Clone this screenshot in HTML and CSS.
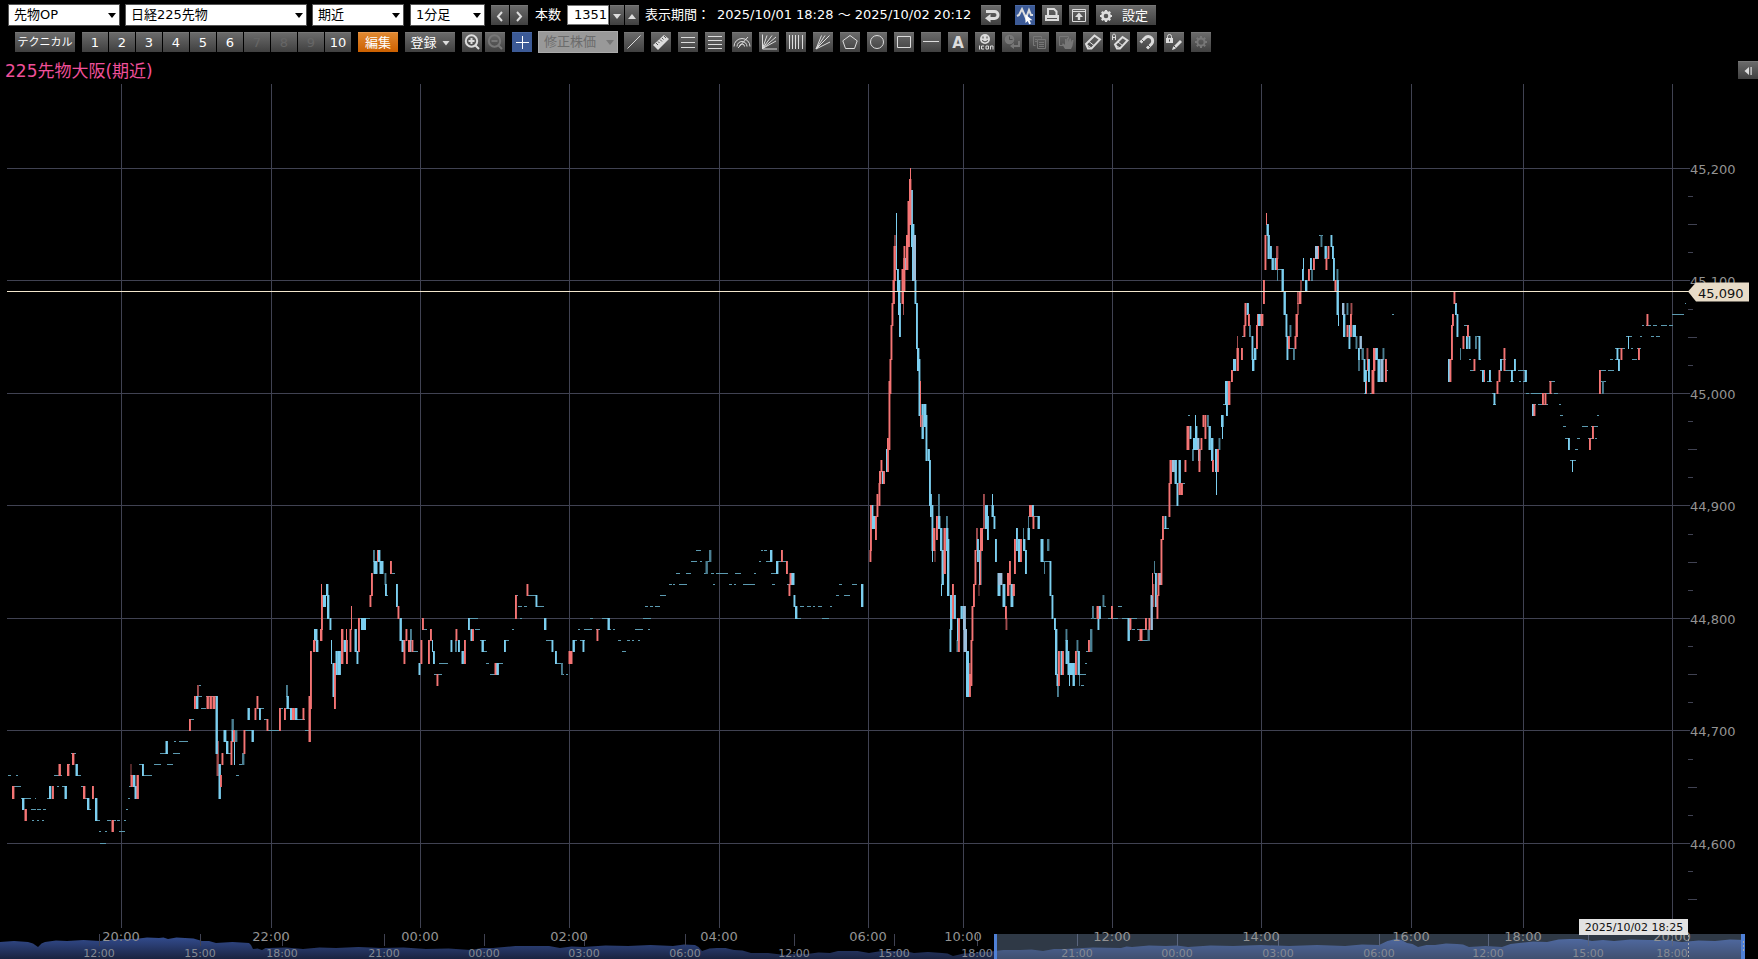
FILE: index.html
```html
<!DOCTYPE html>
<html lang="ja">
<head>
<meta charset="utf-8">
<title>225先物大阪(期近)</title>
<link rel="stylesheet" href="styles.css">
</head>
<body>
<header class="toolbars">
  <div class="bar bar-main">
    <label class="pick pick-market"><select aria-label="市場"><option>先物OP</option></select></label>
    <label class="pick pick-symbol"><select aria-label="銘柄"><option>日経225先物</option></select></label>
    <label class="pick pick-month"><select aria-label="限月"><option>期近</option></select></label>
    <label class="pick pick-span"><select aria-label="足種"><option>1分足</option></select></label>
    <div class="pair">
      <button class="btn arrow" aria-label="前へ"><svg viewBox="0 0 18 20"><path class="s2" d="M11 6 7 10.500 11 15"/></svg></button>
      <button class="btn arrow" aria-label="次へ"><svg viewBox="0 0 18 20"><path class="s2" d="M7 6 11 10.500 7 15"/></svg></button>
    </div>
    <label class="caption" for="count">本数</label>
    <div class="pair count">
      <input id="count" type="text" value="1351">
      <button class="btn step" aria-label="減らす"><svg viewBox="0 0 14 20"><path class="f" d="M3 8h8L7 13z"/></svg></button>
      <button class="btn step" aria-label="増やす"><svg viewBox="0 0 14 20"><path class="f" d="M3 13h8L7 8z"/></svg></button>
    </div>
    <span class="caption period">表示期間：</span>
    <span class="caption range">2025/10/01 18:28 ～ 2025/10/02 20:12</span>
    <button class="btn icon" aria-label="戻す"><svg viewBox="0 0 20 20"><path d="M5 6.500h8.500a2.500 2.500 0 0 1 0 7H8" fill="none" stroke="#ddd" stroke-width="3"/><path class="f" d="M9.500 9v8.500L4 13.300z"/></svg></button>
    <div class="tools view-tools">
      <button class="btn icon on" aria-label="チャート選択"><svg viewBox="0 0 20 20"><path class="s2" d="M2 11l2-1 3-6 4 9 3-8 2 5h2"/><path d="M10.500 9.500v8.500l2.200-2 1.500 3.200 1.800-.8-1.500-3.100h3z" fill="#fff"/></svg></button>
      <button class="btn icon" aria-label="印刷"><svg viewBox="0 0 20 20"><path class="s2" d="M6 10V4h6l2.500 2.500V10"/><path class="f" d="M3 10h14v6H3z"/><path d="M5 13.500h10" stroke="#555"/></svg></button>
      <button class="btn icon" aria-label="別画面"><svg viewBox="0 0 20 20"><path class="s1" d="M3.500 4.500h13v12h-13zM3.500 6.500h13"/><path class="f" d="M10 7.500 14 12h-2.800v3H8.800v-3H6z"/></svg></button>
      <button class="btn setup"><svg viewBox="0 0 20 20"><circle cx="10" cy="10" r="3.600" fill="none" stroke="#ddd" stroke-width="2.600"/><path d="M10 4v2M10 14v2M4 10h2M14 10h2M5.800 5.800l1.400 1.400M12.800 12.800l1.400 1.400M5.800 14.200l1.400-1.400M12.800 7.200l1.400-1.400" stroke="#ddd" stroke-width="2.200"/></svg><span>設定</span></button>
    </div>
  </div>

  <div class="bar bar-tools">
    <button class="btn technical">テクニカル</button>
    <div class="pair numbers">
      <button class="btn">1</button><button class="btn">2</button><button class="btn">3</button><button class="btn">4</button><button class="btn">5</button><button class="btn">6</button><button class="btn" disabled>7</button><button class="btn" disabled>8</button><button class="btn" disabled>9</button><button class="btn">10</button>
    </div>
    <button class="btn edit">編集</button>
    <button class="btn save">登録<svg viewBox="0 0 8 8"><path class="f" d="M.5 2h7L4 6.500z"/></svg></button>
    <div class="zooms">
      <button class="btn icon" aria-label="拡大"><svg viewBox="0 0 20 20"><circle class="s2" cx="9.500" cy="9" r="5.700"/><path class="s2" d="M6.500 9h6M9.500 6v6M13.500 13.500 17 17"/></svg></button>
      <button class="btn icon" disabled aria-label="縮小"><svg viewBox="0 0 20 20"><circle class="s2" cx="9.500" cy="9" r="5.700"/><path class="s2" d="M6.500 9h6M13.500 13.500 17 17"/></svg></button>
    </div>
    <button class="btn icon on" aria-label="十字カーソル"><svg viewBox="0 0 20 20"><path d="M10.500 4v13M4 10.500h13" stroke="#fff"/></svg></button>
    <label class="pick pick-adjust"><select aria-label="修正株価" disabled><option>修正株価</option></select></label>
    <div class="tools">
      <button class="btn icon" aria-label="直線"><svg viewBox="0 0 20 20"><path class="s1" d="M3.500 16.500l13-13"/></svg></button>
      <button class="btn icon" aria-label="定規"><svg viewBox="0 0 20 20"><path class="f" d="M2 13 13 3l5 4L7 18z"/><path d="M5 11l2 2M7 9.500l1.500 1.500M9 7.500l2 2M11 6l1.500 1.500M13 4l2 2" stroke="#555"/></svg></button>
      <button class="btn icon" aria-label="三本線"><svg viewBox="0 0 20 20"><path class="s1" d="M3 5.500h14M3 10.500h14M3 15.500h14"/></svg></button>
      <button class="btn icon" aria-label="水平線群"><svg viewBox="0 0 20 20"><path class="s1" d="M3 4.500h14M3 8.500h14M3 12.500h14M3 16.500h14"/></svg></button>
      <button class="btn icon" aria-label="アーク"><svg viewBox="0 0 20 20"><path class="s1" d="M2 14.500a8 8 0 0 1 16 0M5 14.500a5 5 0 0 1 10 0M7.500 14.500a2.500 2.500 0 0 1 5 0M6 16 16 5"/></svg></button>
      <button class="btn icon" aria-label="ファン"><svg viewBox="0 0 20 20"><path class="s1" d="M3.500 2.500v14.500h14.500M3.500 16.500 8 3.500M3.500 16.500 13 3.500M3.500 16.500 17 5M3.500 16.500 17 9"/></svg></button>
      <button class="btn icon" aria-label="垂直線群"><svg viewBox="0 0 20 20"><path class="s1" d="M3.500 3v14M6.500 3v14M9.500 3v14M12.500 3v14M16.500 3v14"/></svg></button>
      <button class="btn icon" aria-label="扇形"><svg viewBox="0 0 20 20"><path class="s1" d="M3 17 8.500 3.500M3 17 16.500 3.500M3 17 17 10M3 17 12 3.500"/></svg></button>
      <button class="btn icon" aria-label="多角形"><svg viewBox="0 0 20 20"><path class="s1" d="M10 3.500l7.200 5.300-2.700 7.700h-9L2.800 8.800z"/></svg></button>
      <button class="btn icon" aria-label="円"><svg viewBox="0 0 20 20"><circle class="s1" cx="10" cy="10" r="6.500"/></svg></button>
      <button class="btn icon" aria-label="四角形"><svg viewBox="0 0 20 20"><path class="s1" d="M3.500 4.500h13v11h-13z"/></svg></button>
      <button class="btn icon" aria-label="水平線"><svg viewBox="0 0 20 20"><path class="s1" d="M2 9.500h16"/></svg></button>
      <button class="btn icon letter">A</button>
      <button class="btn icon" aria-label="アイコン"><svg viewBox="0 0 20 20"><circle cx="10" cy="7" r="5" fill="#ddd"/><path d="M8 4.500v2M12 4.500v2M7 8.500q3 3 6 0" stroke="#444" fill="none"/><path class="s1" d="M4.500 13.500v4M9 14H6.500v3H9M11 14h2.500v3H11zM15.500 17.500V14H18v3.500"/></svg></button>
      <button class="btn icon" disabled aria-label="履歴"><svg viewBox="0 0 20 20"><circle class="f" cx="7.500" cy="7.500" r="4.800"/><path d="M7.500 4.500v3h3" stroke="#4c4c4c" fill="none"/><path class="s2" d="M17 9v5h-6"/><path class="f" d="M12 11v6l-4-3z"/></svg></button>
      <button class="btn icon" disabled aria-label="複製"><svg viewBox="0 0 20 20"><path class="s1" d="M6.500 13.500h-2v-9h8v2M8.500 7.500h8v9h-8zM10 10.500h5M10 12.500h5M10 14.500h5M6 7.500h2M6 9.500h2"/></svg></button>
      <button class="btn icon" disabled aria-label="移動"><svg viewBox="0 0 20 20"><path class="s1" d="M8 13.500H3.500v-9h9V7"/><path class="f" d="M9 17l-3-5 1-.8 2 1.500V7h1.500v3L11 6h1.500v4l1-3.500H15V10l1-2h1.500l-1 6-1.500 3z"/></svg></button>
      <button class="btn icon" aria-label="消しゴム"><svg viewBox="0 0 20 20"><path class="s2" d="M3 12 11.500 3.500l5.500 4L8.500 16.500H5z"/><path class="s1" d="M3.500 12.500l5 3.500M6 9.500l5 4"/></svg></button>
      <button class="btn icon" aria-label="全消去"><svg viewBox="0 0 20 20"><path class="s2" d="M5 12.500 12.500 5l5 3.500-7.500 8H7z"/><path class="s1" d="M5.500 13l4.500 3M8 10l4.500 3.500M2.500 8V3.500L3.500 2h1L5.500 3.500V8M2.500 5.500h3"/></svg></button>
      <button class="btn icon" aria-label="マグネット"><svg viewBox="0 0 20 20"><path d="M3.500 10.500 8 6a4.300 4.300 0 0 1 6.500 6L10 16.500" fill="none" stroke="#ddd" stroke-width="3"/><path d="M4.500 7.500l3 3M10 12l3 3" stroke="#555"/></svg></button>
      <button class="btn icon" aria-label="描画ロック"><svg viewBox="0 0 20 20"><path class="f" d="M2 6h7v5H2z"/><path class="s1" d="M3.500 6V4.500a2 2 0 0 1 4 0V6"/><path class="f" d="M16 8l2 2-7 7-3 1 1-3z"/><path d="M5.500 7.500v2M10 14l1.500 1.500" stroke="#444"/></svg></button>
      <button class="btn icon" disabled aria-label="描画設定"><svg viewBox="0 0 20 20"><circle class="s2" cx="10" cy="10" r="3.600"/><path class="s2" d="M10 4v2M10 14v2M4 10h2M14 10h2M5.800 5.800l1.400 1.400M12.800 12.800l1.400 1.400M5.800 14.200l1.400-1.400M12.800 7.200l1.400-1.400"/></svg></button>
    </div>
  </div>
</header>
<div class="heading">
  <h1>225先物大阪(期近)</h1>
  <button class="btn fold" aria-label="パネルを開く"><svg viewBox="0 0 20 18"><path class="f" d="M11 5v8L6.500 9zM12.500 5h1.200v8h-1.200z"/></svg></button>
</div>
<main class="chart"><svg id="chart" role="img" aria-label="1分足チャート"></svg></main>
<script src="chart.js"></script>
</body>
</html>
```

FILE: styles.css
```css
* { box-sizing: border-box; }

body {
  margin: 0;
  height: 100vh;
  display: flex;
  flex-direction: column;
  overflow: hidden;
  background: #000;
  color: #fff;
  font: 13px/20px "DejaVu Sans", "Noto Sans CJK JP", sans-serif;
}

.toolbars {
  display: flex;
  flex-direction: column;
  gap: 5px;
  padding: 4px 8px 0;
}

.bar {
  display: flex;
  align-items: center;
  height: 22px;
  white-space: nowrap;
}

.bar > * { flex: none; }

.pair { display: flex; gap: 1px; }
.tools { display: flex; gap: 7px; }
.zooms { display: flex; gap: 3px; }

.btn {
  display: flex;
  align-items: center;
  justify-content: center;
  height: 20px;
  padding: 0;
  border: 0;
  border-top: 1px solid #777;
  background: linear-gradient(#6a6a6a, #404040);
  color: #fff;
  font: inherit;
  line-height: 18px;
}

.btn svg { display: block; flex: none; }
.btn .f { fill: #ddd; }
.btn .s1, .btn .s2 { fill: none; stroke: #ddd; stroke-width: 1; }
.btn .s2 { stroke-width: 2; }
.btn:disabled { color: #666; }
.btn:disabled .f { fill: #777; }
.btn:disabled .s1, .btn:disabled .s2 { stroke: #777; }

.icon { width: 20px; }
.icon svg { width: 20px; height: 20px; margin-top: -1px; }
.on { background: #3c5a96; border-top-color: #4c6aa4; }
.letter { font-weight: bold; font-size: 15px; color: #ddd; }

.pick { position: relative; display: block; height: 22px; }

.pick::after {
  content: "";
  position: absolute;
  top: 9px;
  right: 4px;
  border: 4px solid transparent;
  border-top: 5px solid #000;
  border-bottom: 0;
  pointer-events: none;
}

.pick select {
  display: block;
  width: 100%;
  height: 22px;
  padding: 0 5px;
  appearance: none;
  border: 1px solid #555;
  border-radius: 0;
  background: #fff;
  color: #000;
  font: inherit;
  line-height: 20px;
  opacity: 1;
}

.pick-market { width: 112px; margin-right: 5px; }
.pick-symbol { width: 182px; margin-right: 5px; }
.pick-month { width: 92px; margin-right: 6px; }
.pick-span { width: 75px; margin-right: 6px; }

.arrow { width: 18px; }
.arrow svg { width: 18px; height: 20px; }
.step { width: 14px; }
.step svg { width: 14px; height: 20px; }

.caption { margin-left: 7px; line-height: 22px; }
.count { margin-left: 6px; }
.count input {
  width: 42px;
  height: 20px;
  padding: 0 1px;
  border: 1px solid #777;
  background: #fff;
  color: #000;
  font: inherit;
  text-align: right;
}
.period { width: 65px; margin-left: 6px; }
.range { width: 258px; }
.range + .btn { margin-left: 6px; }
.view-tools { margin-left: 14px; }
.setup { width: 60px; gap: 6px; justify-content: flex-start; }
.setup svg { width: 20px; height: 20px; }

.bar-tools { padding-left: 7px; }
.technical { width: 60px; font-size: 11px; }
.numbers { margin-left: 7px; }
.numbers .btn { width: 26px; }
.edit {
  width: 40px;
  margin-left: 7px;
  border-top-color: #e89a50;
  background: linear-gradient(#e08830, #cc6000);
}
.save { width: 50px; margin-left: 7px; gap: 5px; }
.save svg { width: 8px; height: 8px; }
.zooms { margin: 0 7px; }
.pick-adjust { width: 80px; margin: 0 6px; }
.pick-adjust select { background: #999; border-color: #aaa; color: #6c6c6c; }
.pick-adjust::after { border-top-color: #777; }

.heading {
  display: flex;
  justify-content: space-between;
  align-items: center;
  height: 31px;
  padding: 5px 0 0 5px;
}

.heading h1 {
  margin: 0;
  color: #f0509a;
  font-size: 17px;
  font-weight: normal;
  line-height: 24px;
}

.fold { width: 20px; height: 18px; margin-bottom: 2px; }
.fold svg { width: 20px; height: 18px; }

.chart { flex: 1; min-height: 0; }
.chart svg { display: block; width: 100%; height: 100%; }

.grid { stroke: #404252; }
.axis-text { fill: #939393; font-size: 13px; }
.nav-text { fill: #858a94; font-size: 11px; }
.middle { text-anchor: middle; }
.up { fill: #f47474; }
.down { fill: #7ccff0; }
.mixed { fill: #9cbfdc; }
.down-dim { fill: #4b7f92; }
.up-dim { fill: #a04c4e; }
.flat { fill: #5c9bb1; }
.current { stroke: #f2e6cc; }
.tag { fill: #e8dcc8; }
.tag-text { fill: #111; font-size: 13px; }
.tip { fill: #e2e2e2; }
.tip-text { fill: #111; font-size: 11px; }
.window { fill: #8ba6cc; fill-opacity: .34; }
.handle { fill: #4f80d6; }
.dashed { stroke: #aaa; stroke-dasharray: 2 2; }
```

FILE: chart.js
```js
// Bars: left,high,low[,width]; high and low count 10-yen steps below 45,200.
const bars = {
  'down-dim': `242,52,53 231.500,49,50 235,50,51 286,46,47,1.500 373,34,35,1.500 384.500,36,37,1.500 410,41,42,1.500 455,42,43,1.500 561,44,45,1.500
    709,34,35 705.500,35,36 956.500,42,43,1.500 1044,35,36,1 1047,33,34 1057,46,47,1.500 1065.500,41,42,1.500 1076.500,42,43,1.500 1079,45,46,1
    1090,41,43 1092,39,40,1.500 1102.500,38,39,1.500 1147.500,41,42 1154,35,36,1 1192,25,26,1.500 1207,22,23,1.500 1218.500,24,25,1.500 1249,14,15,1.500 1289.500,14,15,1.500
    1277,9,10,1 1293,16,17,1.500 1320.500,6,7,1.500 1336.500,9,10,1.500 1346.500,12,13,1.500 1355.500,15,16,1.500 1361.500,16,17 1382.500,16,17,1.500
    1460,16,17,1 1475,15,16,1.500 1602,19,20,1.500 1103,38,39,1 938,29,31,1.500 946,31,32,1.500 1023,32,33,1 1028,31,32,1`,
  'up-dim': `130.500,53,54,1 197,46,47,1.500 216.500,51,54 377,34,35,1.500 903,8,13,1 934.500,34,35,1 978.500,37,38,1 1005.500,40,41,1.500
    983,29,32,1.500 968,44,46 976,32,34,1.500 1237,15,16,1 1276,7,8 1297,11,12,1.500 1350.500,12,13,1.500 1366.500,16,17,1.500 1152,37,39,2`,
  down: `22,56,57 49,55,56 64.500,55,56 75.500,53,54 87,56,57 95,56,58 133,54,55 134.500,55,56 142,53,54,1.500 165.500,51,52 196,47,48
    215.500,47,52 218.500,53,56 223.500,50,51,2.500 226,51,52 231.500,50,51 234,51,53,1 251.500,50,51 247.500,48,49 259,48,49,1.500 286.500,47,48 290,48,49 295,48,49
    314,41,42,3.500 316,42,43 323,38,39,3 326,37,38 327,38,40 329.500,40,41,1.500 331,42,44,1 332.500,44,47 335.500,43,45 338,43,45,2.500 343.500,42,43,2.500
    354.500,41,43 356.500,43,44,1.500 361,40,41,5 373.500,35,36,4 378,34,35 379.500,35,36,4 385,37,38,1.500 396,37,39,1.500 399.500,40,42 401.500,42,43 409,42,43
    418.500,44,45,1.500 432,42,43,1 433,43,44,1.500 450.500,42,43,1.500 458,42,43,1.500 461.500,43,44 468,40,41,1.500 470.500,41,42 481.500,42,43 496,44,45,2.500
    504,42,43,1.500 535.500,38,39,1.500 544,40,41 551.500,42,43,1.500 555,43,44,1.500 572.500,42,43 582.500,42,43,1.500 607.500,40,41 770,34,35 776,35,36
    791,36,37,3.500 793.500,38,39,1.500 795,39,40 861,37,39
    871,30,32 873,31,32 882,27,28 886,25,27,1.500 896,4,9,1 897,9,11,1.500 898,10,13 899,12,15,1.500 904.500,8,9 911,2,7,1.500 912,5,10,2 914.500,10,12,1.500
    916,12,16,1.500 917,16,18 918.500,17,22,1.500 921.500,21,24,2 924,21,23,2 925.500,22,26,1.500 927.500,25,26 929,26,30,1.500 930,29,31,1.500 931.500,30,34,1.500 932,34,35,1
    938,31,32 940,32,34 941.500,34,37 941,37,38,1 946,32,34 947,33,38 950,38,41 949.500,41,43,1.500 954,38,40,1.500 957,40,42 960.500,39,40 966,43,47,3
    977,33,35,1.500 985,30,32,3 987,31,33,1.500 991.500,30,31 992,29,30,1 993.500,31,32,1.500 995,33,35,1.500 997.500,36,38,3 1002.500,37,39,2.500 1010.500,37,39,2.500
    1016,32,34,1.500 1018,33,35 1023,33,34 1025,34,36,1.500 1027.500,32,33 1031.500,30,31 1037.500,31,32 1040.500,33,35,3 1049.500,35,38,1.500 1051.500,38,40,1.500
    1054,40,41,1.500 1055,41,45 1056.500,45,46,1.500 1060.500,43,45 1065.500,42,44,2 1067.500,43,45,1.500 1069,44,45,4 1069,45,46,1 1072.500,44,46,2 1077.500,43,45
    1097.500,40,41,1.500 1098.500,39,40 1127.500,40,42 1155,36,39,1.500 1159,36,37 1164.500,31,32,1.500 1174.500,26,28 1176.500,28,30,1.500 1178.500,26,28
    1189.500,23,24,1.500 1193,24,25,2.500 1195,23,25 1195,22,23,1 1198,25,26 1208.500,23,25 1211,24,26 1215,25,27 1216,27,29,1 1221.500,22,23,1.500 1222,23,24,1
    1225,19,21,2.500 1226,21,22,1.500 1221,22,23 1233,17,18,3 1246.500,12,13 1251.500,15,17,1.500 1252,17,18 1254,16,17 1258,13,14,2.500 1266.500,5,6
    1267.500,6,8 1270,7,8,1.500 1271.500,8,9 1274.500,8,9,1.500 1281.500,9,11 1283.500,11,13 1285.500,13,15,1.500 1286.500,15,17,1.500 1302,9,10,1.500 1303,8,9,1
    1305,10,11,2 1310,8,9,1.500 1311.500,9,10,1 1324.500,7,8,2 1330.500,6,7,1.500 1332,7,8,1.500 1333,8,10,1.500 1336.500,10,13,2 1338,13,14,1 1343,13,15,2
    1348.500,14,16,1.500 1352.500,14,15,3.500 1358,16,17,1.500 1358.500,17,18,1 1363.500,17,19,1.500 1365,18,20,1.500 1368,17,19,1.500 1375,16,17,2.500 1377.500,17,19,3
    1448,17,19 1455,12,13,1.500 1456.500,13,15,1.500 1466,15,16,1.500 1468.500,15,16,1.500 1478.500,15,17,1.500 1482,18,19,1.500 1489,18,19,1.500 1493.500,20,21,1.500 1500,17,18,1.500
    1511,18,19,1.500 1514,17,18,1.500 1524.500,18,19 1532,21,22 1568,24,25,1.500 1572,26,27,1 1616.500,16,17,1.500 1618,17,18,1.500 1628,15,16,1`,
  mixed: `913,6,10,3 963,39,41,2.500 963.500,41,43,3.500 979,34,37,2 998,36,37,2 1000,36,37,2 1150.500,38,41,2 1172,26,27,2.500 1315,7,8,3
    1359.500,15,16,2 1380.500,17,19,3 1197,24,25,2 1342,12,13,2`,
  up: `12,55,56 24.500,57,58 52,55,56,1.500 58.500,53,54 67,53,54 72,52,53 83,55,56 92,55,56,1.500 111.500,58,59 130.500,54,55 136.500,54,56,2 189,49,50,1.500
    194,47,48,1.500 206.500,47,48 209.500,47,48 212.500,47,48,2.500 220,54,55,1.500 221.500,52,53,1.500 230.500,51,53,1.500 233,50,51,1.500 243.500,50,52,1.500 254.500,48,49,1.500 256.500,47,48,1.500 266.500,49,50,1.500
    279,48,50,1.500 284,48,49,1.500 292,48,49,2.500 302.500,48,49,1.500 308.500,47,51 310,43,48,1.500 313,42,43 320,41,42 321,38,41,1.500 321,37,38,1 334,44,48,1.500
    341,41,44,2 346,42,44,1.500 346,41,42,1 349.500,41,43,1.500 351,39,41,1 358,40,43,1.500 369.500,38,39,1.500 371,36,38,1.500 377,34,35,1 390,35,36,1.500 397.500,39,40,1.500 403.500,42,44,1.500
    405.500,41,42,1.500 408,42,43 411.500,42,43,1.500 420.500,42,44,1.500 422,40,41,1.500 428,42,44,1.500 430,41,42,1.500 436.500,45,46,1.500 455.500,41,42,1.500 464,42,44,1.500
    472,41,42,1.500 494.500,44,45,1.500 515,38,40,1.500 526.500,37,38,1.500 568.500,43,44,4 596.500,41,42,1.500 781,34,35,1.500 786,35,36,1.500 789.500,36,37,1.500 788.500,37,38,1.500
    869.500,34,35,1.500 870,30,34,1.500 875,31,33,1.500 876.500,29,31,1.500 878.500,28,30,1.500 879,27,28 880.500,26,27,1.500 883,27,28,1.500 887,24,27,1.500 888.500,19,25,1.500 889.500,17,20,1.500
    890.500,14,17,1.500 891.500,12,14,1.500 892.500,10,12 893.500,7,10,2 894.500,6,7,1 901.500,9,12,2 903.500,7,11,1.500 906,6,9,2 907.500,3,7,2 909,1,5,2 910,0,1,1
    920,19,23,1 921.500,22,23,1 933,32,34,2 936,31,33,1.500 943.500,32,36,2 952,37,40,1.500 958,40,43,1.500 969,45,47,1.500 970.500,42,46,1.500 971.500,39,42,1.500 973,37,39,1.500 974.500,34,37,1.500
    980,34,37,1 980,32,34,3 1005,39,40,1.500 1007,36,38,2 1009,35,37,1.500 1012.500,37,38 1014,33,36,1.500 1020,33,35,1.500 1029,30,31,2.500 1032.500,31,32,1.500
    1058,43,46,1.500 1062,43,45,1.500 1075,43,45,1.500 1088,42,43,1.500 1096.500,39,40,2 1111,39,40,1.500 1129.500,40,41,1.500 1139.500,41,42,3 1145,40,41,1.500 1148.500,40,41,1.500
    1152,36,38,1 1156.500,38,40,1.500 1157.500,36,38,1.500 1160.500,33,37,1.500 1162,31,33,1.500 1168.500,28,31,1.500 1169.500,26,28,2 1178.500,28,29 1181,28,29,1.500 1184.500,26,27,1.500 1186.500,23,25,2.500
    1198.500,25,27,1.500 1200.500,24,25,1.500 1202.500,22,23,1.500 1204.500,22,24,1.500 1212,26,27,1.500 1217,25,27,1.500 1228,19,21,2 1231,18,19,1.500 1236.500,16,18,2 1241,16,17,1.500
    1243.500,14,15,1.500 1244.500,12,14,1.500 1248,13,14,1.500 1256,14,16,1.500 1257,13,14,1 1260.500,13,14,2.500 1263,10,12,1.500 1264.500,6,9,1.500 1266,4,5,1 1276,8,9,1.500
    1288,15,16,1.500 1294.500,15,16,1.500 1295.500,13,15,2 1297.500,12,13,1 1299,11,12,2 1300.500,10,11,1 1308,9,10,1.500 1313,8,9,1.500 1318,7,8,1 1325.500,8,9,1.500 1327.500,7,8,1.500 1334.500,10,11,1.500
    1346.500,14,15,1.500 1350,13,15,1.500 1366,19,20,1 1367,17,18,1 1371.500,18,20,2.500 1373,16,18,2 1385,17,19,1.500 1449.500,17,19,1.500 1451,14,17,1.500 1452,13,14,1.500 1453.500,11,12,1.500
    1462.500,15,16,1.500 1467,14,15,1.500 1473.500,17,18,1.500 1484,18,19,1 1496.500,19,20,1.500 1498.500,18,19,1.500 1503.500,16,18,1.500 1533.500,21,22,1.500 1542,20,21,1.500 1544.500,20,21,1.500
    1549.500,19,20,1.500 1589,24,25,1.500 1592,23,24,1.500 1599,18,20,1.500 1620.500,16,17,1.500 1638,16,17,1.500 1646.500,13,14,1.500`
};

// Minutes without movement: level, then start-end pairs.
const flats = `54 8-11 16-18 54-62 77-81 143-152 236-239|55 12-21 57-59 62-67 81-83 129-131|56 21-31 35-36 47-50 85-89 128-130|57 31-36 37-41 43-46 87-91 126-128
|58 32-34 37-39 42-44 96-100 107-111 113-116 117-120 124-126|59 99-101 105-107 119-125|60 100-106|53 67-70 139-143 154-161 167-173 239-243|52 71-76 160-168 173-180 228-231
|51 174-176 179-188|49 189-194 264-267 296-305|46 199-201|47 197-202 206-216|48 201-206 258-264 279-283 286-293|50 244-253 268-279 305-309
|40 358-370 468-478 520-522 590-593 602-608 643-651 797-801 822-829 1091-1096 1108-1118 1122-1137|38 385-388 515-518 528-536 660-666 836-839 844-850
|36 392-395 676-680 686-691 704-707 711-714 716-728 735-741 754-756 771-777|43 413-418 482-487 622-626 1086-1090|41 423-427 475-480 512-514 578-580 584-592 596-600 608-611 613-615 635-643 648-650 1132-1135 1137-1147
|45 434-442 490-497 562-564 566-568 1080-1086|44 439-448 486-489 498-503 555-563 1085-1087|42 480-486 504-509 546-553 573-577 580-585 618-621 627-630 632-634 638-640 1138-1149
|39 518-522 524-527 536-544 645-648 650-653 655-660 800-804 807-811 813-815 818-822 830-832 1103-1106 1118-1122|37 669-672 673-675 679-687 713-715 729-732 734-736 743-755 772-775 787-789 839-842 852-857
|35 691-697 700-702 706-710 759-761 766-772 777-787 1042-1050|34 696-701 761-763 764-767|46 1081-1084|31 1032-1038|32 1164-1169|28 1180-1185|22 1188-1190|21 1223-1225
|15 1242-1244 1475-1480 1626-1632 1640-1642 1651-1654 1656-1660|16 1289-1294 1615-1625 1631-1633 1637-1641|12 1297-1300 1685-1686|9 1278-1282|6 1319-1323|20 1364-1367 1370-1374 1492-1495 1526-1529 1531-1542 1544-1552 1554-1558|18 1386-1388 1470-1474 1480-1485 1505-1516 1518-1525 1600-1606 1608-1614
|13 1392-1394 1672-1684|14 1464-1469 1642-1644 1646-1651 1653-1657 1661-1667 1669-1673|17 1469-1471 1480-1481 1500-1506 1610-1613 1615-1617 1632-1637|19 1487-1492 1510-1514 1519-1521 1523-1525 1549-1555 1601-1606
|21 1493-1496 1534-1536 1538-1548 1559-1561|22 1560-1563 1597-1599|23 1563-1566 1582-1588 1591-1598|24 1565-1569 1577-1580 1588-1594 1595-1597|26 1570-1576|25 1575-1578`;

const hours = [[121,'20:00'],[271,'22:00'],[420,'00:00'],[569,'02:00'],[719,'04:00'],[868,'06:00'],[963,'10:00'],[1112,'12:00'],[1261,'14:00'],[1411,'16:00'],[1523,'18:00'],[1672,'20:00']];
const navHours = [[99,'12:00'],[200,'15:00'],[282,'18:00'],[384,'21:00'],[484,'00:00'],[584,'03:00'],[685,'06:00'],[794,'12:00'],[894,'15:00'],[977,'18:00'],[1077,'21:00'],[1177,'00:00'],[1278,'03:00'],[1379,'06:00'],[1488,'12:00'],[1588,'15:00'],[1672,'18:00']];

// Overview: x, height above the bottom edge.
const overview = [[0,17],[28,17],[38,12],[45,17],[67,18],[100,18],[135,20],[159,21],[168,20],[185,21],[202,18],[216,16],[249,16],[253,10],[262,9],[269,11],[303,10],[336,11],[381,11],[426,10],[471,9],[493,11],[538,13],[560,11],[583,12],[628,13],[673,13],[695,14],[702,8],[717,11],[734,9],[751,6],[785,4],[807,5],[830,6],[846,8],[869,6],[894,8],[914,6],[942,6],[953,3],[975,6],[987,7],[1020,9],[1043,8],[1065,10],[1121,11],[1132,12],[1166,13],[1188,12],[1233,13],[1289,13],[1345,13],[1379,14],[1396,20],[1407,16],[1418,12],[1435,14],[1457,15],[1469,12],[1502,12],[1519,16],[1547,17],[1570,20],[1592,18],[1614,18],[1648,19],[1682,17],[1715,18],[1745,19]];

function draw() {
  const svg = document.getElementById('chart');
  const { width: W, height: H } = svg.getBoundingClientRect();
  const kx = W / 1758;
  const bottom = H - 31;
  const ky = bottom / 844;
  const X = x => x * kx;
  const Y = level => (84.5 + level * 11.25) * ky;
  const crisp = v => Math.floor(v) + 0.5;
  const out = [];
  const line = (x1, y1, x2, y2, c) => out.push(`<line class="${c}" x1="${x1}" y1="${y1}" x2="${x2}" y2="${y2}"/>`);
  const rect = (x, y, w, h, c) => out.push(`<rect class="${c}" x="${x}" y="${y}" width="${w}" height="${h}"/>`);
  const text = (x, y, s, c) => out.push(`<text class="${c}" x="${x}" y="${y}">${s}</text>`);

  out.push('<defs><linearGradient id="area" x1="0" y1="0" x2="0" y2="1"><stop offset="0" stop-color="#324b8c"/><stop offset="1" stop-color="#1a2340"/></linearGradient></defs>');

  const top = overview.map(([x, h], i) => {
    const prev = overview[i - 1];
    return prev ? `L${X((x + prev[0]) / 2)} ${H - (h + prev[1]) / 2 - 1}L${X(x)} ${H - h}` : `L${X(x)} ${H - h}`;
  }).join('');
  out.push(`<path d="M0 ${H}${top}L${X(1745)} ${H}z" fill="url(#area)"/>`);

  hours.forEach(([x]) => line(crisp(X(x)), 0, crisp(X(x)), bottom, 'grid'));
  for (let l = 0; l <= 60; l += 10) line(X(7), crisp(Y(l) - 0.5), X(1690), crisp(Y(l) - 0.5), 'grid');
  for (let l = 2.5; l <= 65; l += 2.5) {
    if (l % 10) line(X(1688), crisp(Y(l)), X(1688) + (l % 5 ? 5 : 9), crisp(Y(l)), 'grid');
  }

  flats.split('|').forEach(row => {
    const [level, ...runs] = row.trim().split(/\s+/);
    runs.forEach(run => {
      const [a, b] = run.split('-').map(Number);
      rect(X(a), Math.floor(Y(+level) - 0.5), X(b - a), 1, 'flat');
    });
  });
  Object.entries(bars).forEach(([kind, list]) => list.trim().split(/\s+/).forEach(item => {
    const [x, hi, lo, w = 2] = item.split(',').map(Number);
    const y = Math.floor(Y(hi) - 0.5);
    const width = w > 1 && w < 3 ? w + 0.4 : w;
    rect(X(x), y, width * kx, Math.floor(Y(lo) - 0.5) - y + 1, kind);
  }));

  for (let l = 0; l <= 60; l += 10) text(X(1690), Y(l) + 5, (45200 - l * 10).toLocaleString('en-US'), 'axis-text');
  const cy = crisp(Y(11) - 0.5);
  line(X(7), cy, X(1690), cy, 'current');
  const tx = X(1688);
  out.push(`<path class="tag" d="M${tx} ${cy}l8 -9h53v19h-53z"/>`);
  text(tx + 10, cy + 6, '45,090', 'tag-text');

  navHours.forEach(([x]) => line(crisp(X(x)), H - 25, crisp(X(x)), H - 13, 'grid'));
  rect(X(995), H - 25, X(748), 25, 'window');
  hours.forEach(([x, s]) => text(X(x), H - 18, s, 'axis-text middle'));
  navHours.forEach(([x, s]) => text(X(x), H - 2, s, 'nav-text middle'));
  rect(X(994), H - 25, 3, 25, 'handle');
  rect(X(1741), H - 25, 4, 25, 'handle');
  line(crisp(X(1743)), H - 18, crisp(X(1743)), H - 6, 'dashed');
  line(crisp(X(1688)), H - 24, crisp(X(1688)), H, 'dashed');
  rect(X(1688) - 109, H - 40, 109, 16, 'tip');
  text(X(1688) - 54, H - 28, '2025/10/02 18:25', 'tip-text middle');
  svg.innerHTML = out.join('');
}
draw();
window.addEventListener('resize', draw);
```
